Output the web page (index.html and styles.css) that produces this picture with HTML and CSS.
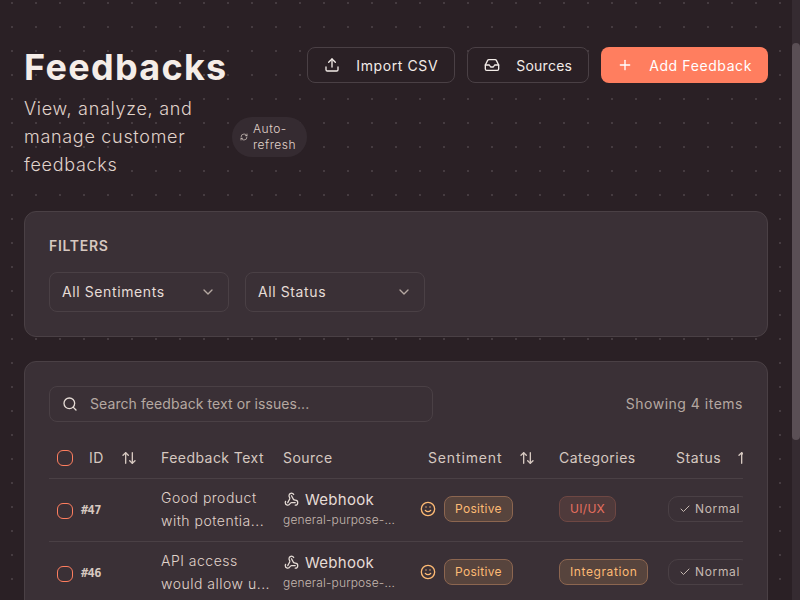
FILE: index.html
```html
<!DOCTYPE html>
<html lang="en">
<head>
  <meta charset="UTF-8" />
  <meta name="viewport" content="width=device-width, initial-scale=1.0" />
  <title>Feedbacks</title>
  <link rel="stylesheet" href="styles.css">
</head>
<body>
  <svg class="sprite" xmlns="http://www.w3.org/2000/svg">
    <symbol id="i-upload" viewBox="0 0 24 24"><path d="M21 15v4a2 2 0 0 1-2 2H5a2 2 0 0 1-2-2v-4"/><polyline points="17 8 12 3 7 8"/><line x1="12" y1="3" x2="12" y2="15"/></symbol>
    <symbol id="i-inbox" viewBox="0 0 24 24"><polyline points="22 12 16 12 14 15 10 15 8 12 2 12"/><path d="M5.45 5.11 2 12v6a2 2 0 0 0 2 2h16a2 2 0 0 0 2-2v-6l-3.45-6.89A2 2 0 0 0 16.76 4H7.24a2 2 0 0 0-1.79 1.11z"/></symbol>
    <symbol id="i-plus" viewBox="0 0 24 24"><path d="M5 12h14"/><path d="M12 5v14"/></symbol>
    <symbol id="i-chevron" viewBox="0 0 24 24"><path d="m6 9 6 6 6-6"/></symbol>
    <symbol id="i-search" viewBox="0 0 24 24"><circle cx="11" cy="11" r="8"/><path d="m21 21-4.3-4.3"/></symbol>
    <symbol id="i-sort" viewBox="0 0 24 24"><path d="m21 16-4 4-4-4"/><path d="M17 20V4"/><path d="m3 8 4-4 4 4"/><path d="M7 4v16"/></symbol>
    <symbol id="i-webhook" viewBox="0 0 24 24"><path d="M18 16.98h-5.99c-1.1 0-1.95.94-2.48 1.9A4 4 0 0 1 2 17c.01-.7.2-1.4.57-2"/><path d="m6 17 3.13-5.78c.53-.97.1-2.18-.5-3.1a4 4 0 1 1 6.89-4.06"/><path d="m12 6 3.13 5.73C15.66 12.7 16.9 13 18 13a4 4 0 0 1 0 8"/></symbol>
    <symbol id="i-smile" viewBox="0 0 24 24"><circle cx="12" cy="12" r="10"/><path d="M8 14s1.5 2 4 2 4-2 4-2"/><line x1="9" y1="9" x2="9.01" y2="9"/><line x1="15" y1="9" x2="15.01" y2="9"/></symbol>
    <symbol id="i-check" viewBox="0 0 24 24"><path d="M20 6 9 17l-5-5"/></symbol>
    <symbol id="i-refresh" viewBox="0 0 24 24"><path d="M3 12a9 9 0 0 1 9-9 9.75 9.75 0 0 1 6.74 2.74L21 8"/><path d="M21 3v5h-5"/><path d="M21 12a9 9 0 0 1-9 9 9.75 9.75 0 0 1-6.74-2.74L3 16"/><path d="M8 16H3v5"/></symbol>
  </svg>

  <main class="page">
    <header class="page-head">
      <div class="head-left">
        <h1>Feedbacks</h1>
        <div class="sub-row">
          <p class="subtitle">View, analyze, and manage customer feedbacks</p>
          <span class="auto-badge">
            <svg class="icon icon-8"><use href="#i-refresh"/></svg>
            <span class="auto-text">Auto-refresh</span>
          </span>
        </div>
      </div>
      <div class="head-actions">
        <button class="btn"><svg class="icon"><use href="#i-upload"/></svg>Import CSV</button>
        <button class="btn btn-sources"><svg class="icon"><use href="#i-inbox"/></svg>Sources</button>
        <button class="btn btn-primary"><svg class="icon"><use href="#i-plus"/></svg>Add Feedback</button>
      </div>
    </header>

    <section class="card filters">
      <h2>FILTERS</h2>
      <div class="filter-row">
        <div class="select">All Sentiments<svg class="icon chev"><use href="#i-chevron"/></svg></div>
        <div class="select">All Status<svg class="icon chev"><use href="#i-chevron"/></svg></div>
      </div>
    </section>

    <section class="card list">
      <div class="list-top">
        <div class="search">
          <svg class="icon"><use href="#i-search"/></svg>
          <span>Search feedback text or issues...</span>
        </div>
        <span class="count">Showing 4 items</span>
      </div>

      <div class="table-wrap">
        <table>
          <colgroup>
            <col class="c-check"><col class="c-id"><col class="c-text"><col class="c-source"><col class="c-sent"><col class="c-cat"><col class="c-status">
          </colgroup>
          <thead>
            <tr>
              <th><span class="check"></span></th>
              <th class="th-sort"><span class="th-in th-id">ID<svg class="icon"><use href="#i-sort"/></svg></span></th>
              <th>Feedback Text</th>
              <th>Source</th>
              <th class="th-sort"><span class="th-in th-sent">Sentiment<svg class="icon"><use href="#i-sort"/></svg></span></th>
              <th>Categories</th>
              <th class="th-sort"><span class="th-in th-status">Status<svg class="icon"><use href="#i-sort"/></svg></span></th>
            </tr>
          </thead>
          <tbody>
            <tr>
              <td><span class="check"></span></td>
              <td class="id">#47</td>
              <td class="fb-text">Good product with potentia...</td>
              <td>
                <div class="src"><svg class="icon icon-15"><use href="#i-webhook"/></svg>Webhook</div>
                <div class="src-sub">general-purpose-...</div>
              </td>
              <td><div class="sent"><svg class="icon smile"><use href="#i-smile"/></svg><span class="tag tag-orange">Positive</span></div></td>
              <td><span class="tag tag-red">UI/UX</span></td>
              <td><span class="status"><svg class="icon icon-12"><use href="#i-check"/></svg>Normal</span></td>
            </tr>
            <tr>
              <td><span class="check"></span></td>
              <td class="id">#46</td>
              <td class="fb-text">API access would allow u...</td>
              <td>
                <div class="src"><svg class="icon icon-15"><use href="#i-webhook"/></svg>Webhook</div>
                <div class="src-sub">general-purpose-...</div>
              </td>
              <td><div class="sent"><svg class="icon smile"><use href="#i-smile"/></svg><span class="tag tag-orange">Positive</span></div></td>
              <td><span class="tag tag-orange tag-wide">Integration</span></td>
              <td><span class="status"><svg class="icon icon-12"><use href="#i-check"/></svg>Normal</span></td>
            </tr>
          </tbody>
        </table>
      </div>
    </section>
  </main>

  <div class="scrollbar"><div class="thumb"></div></div>
</body>
</html>
```
FILE: styles.css
```css
* {
  box-sizing: border-box;
}

html, body {
  margin: 0;
  height: 100%;
  overflow: hidden;
}

body {
  font-family: 'Inter', 'Noto Sans', sans-serif;
  font-size: 14px;
  letter-spacing: 0.5px;
  color: #f3ece8;
  background-color: #2a2025;
  background-image: radial-gradient(circle at center, #453b40 1px, transparent 1.1px);
  background-size: 24px 24px;
  background-position: 0 -9px;
}

.sprite {
  display: none;
}

.icon {
  width: 16px;
  height: 16px;
  flex: none;
  fill: none;
  stroke: currentColor;
  stroke-width: 2;
  stroke-linecap: round;
  stroke-linejoin: round;
}
.icon-8 { width: 8px; height: 8px; }
.icon-12 { width: 12px; height: 12px; }
.icon-15 { width: 15px; height: 15px; }

.page {
  width: 792px;
  padding: 47px 24px 0;
}

.page-head {
  display: flex;
  justify-content: space-between;
  align-items: flex-start;
  margin-bottom: 32px;
}

h1 {
  margin: 0 0 8px;
  font-size: 36px;
  line-height: 40px;
  font-weight: 700;
  letter-spacing: 1.3px;
  color: #f5ede8;
}

.sub-row {
  display: flex;
  align-items: center;
  gap: 8px;
}

.subtitle {
  width: 200px;
  margin: 0;
  font-size: 18px;
  line-height: 28px;
  font-weight: 300;
  letter-spacing: 0.7px;
  color: #e0d3cb;
}

.auto-badge {
  display: flex;
  align-items: center;
  gap: 5px;
  width: 75px;
  height: 40px;
  padding: 0 8px;
  border-radius: 20px;
  background: #352b31;
  font-size: 12px;
  line-height: 16px;
  font-weight: 300;
  color: #e0d3cb;
}
.auto-text {
  width: 50px;
}

.head-actions {
  display: flex;
  gap: 12px;
}

.btn {
  display: flex;
  align-items: center;
  gap: 16px;
  height: 36px;
  padding: 0 16px;
  border: 1px solid #4a4045;
  border-radius: 8px;
  background: #2a2025;
  color: #f3ece8;
  font: inherit;
  letter-spacing: 0.6px;
  white-space: nowrap;
}
.btn-sources {
  letter-spacing: 0.25px;
}
.btn-primary {
  border: 0;
  background: #ff7e5f;
  color: #fff;
}

.card {
  margin-bottom: 24px;
  padding: 24px;
  border: 1px solid #4a4045;
  border-radius: 12px;
  background: #3a3036;
}

.filters {
  height: 126px;
}

h2 {
  margin: 0 0 16px;
  font-size: 14px;
  line-height: 20px;
  font-weight: 600;
  letter-spacing: 0.7px;
  color: #d6c8c0;
}

.filter-row {
  display: flex;
  gap: 16px;
}

.select {
  display: flex;
  align-items: center;
  justify-content: space-between;
  width: 180px;
  height: 40px;
  padding: 0 12px 1px;
  border: 1px solid #4a4045;
  border-radius: 8px;
  letter-spacing: 0.6px;
  color: #e6dcd6;
}
.chev {
  color: #b5a8a1;
}

.list-top {
  display: flex;
  align-items: center;
  justify-content: space-between;
  margin-bottom: 16px;
}

.search {
  display: flex;
  align-items: center;
  gap: 12px;
  width: 384px;
  height: 36px;
  padding: 0 12px 1px;
  border: 1px solid #4a4045;
  border-radius: 8px;
  letter-spacing: 0.08px;
  color: #b5a8a1;
}
.search .icon {
  color: #e6dcd6;
}

.count {
  padding-bottom: 1px;
  letter-spacing: 0.5px;
  color: #b5a8a1;
}

.table-wrap {
  overflow: hidden;
}

table {
  width: 720px;
  table-layout: fixed;
  border-collapse: collapse;
}
.c-check { width: 32px; }
.c-id { width: 72px; }
.c-text { width: 122px; }
.c-source { width: 137px; }
.c-sent { width: 139px; }
.c-cat { width: 109px; }
.c-status { width: 109px; }

th {
  height: 40px;
  padding: 0 8px;
  text-align: left;
  font-weight: 400;
  letter-spacing: 0.45px;
  color: #d6c8c0;
  white-space: nowrap;
}
td {
  height: 63px;
  padding: 0 8px 2px;
  border-top: 1px solid #4a4045;
  vertical-align: middle;
}

.check {
  display: block;
  width: 16px;
  height: 16px;
  border: 1px solid #ff7e5f;
  border-radius: 6px;
}
td .check {
  margin-top: 4px;
}

.th-in {
  display: flex;
  align-items: center;
}
.th-sort .th-sent,
.th-sort .th-status {
  margin-left: 8px;
}
.th-id { gap: 17px; }
.th-sent { gap: 17px; letter-spacing: 0.85px; }
.th-status { gap: 16px; letter-spacing: 0.6px; }

.id {
  padding-left: 0;
  padding-top: 2px;
  font-family: 'DejaVu Sans Mono', monospace;
  font-size: 12px;
  font-weight: 700;
  letter-spacing: -0.6px;
  color: #d6c8c0;
}

.fb-text {
  padding-right: 0;
  line-height: 23px;
  font-weight: 300;
  color: #e0d3cb;
}

.src {
  display: flex;
  align-items: center;
  gap: 6px;
  font-size: 15px;
  line-height: 20px;
  letter-spacing: 0.3px;
  color: #e6dcd6;
}
.src .icon {
  margin-left: 1px;
}
.src-sub {
  margin-top: 2px;
  font-size: 12px;
  line-height: 16px;
  font-weight: 300;
  letter-spacing: 0.15px;
  color: #c5b8b0;
}

.sent {
  display: flex;
  align-items: center;
  gap: 8px;
}
.smile {
  color: #fdba74;
}

.tag {
  display: inline-block;
  height: 26px;
  padding: 0 10px;
  border: 1px solid;
  border-radius: 8px;
  font-size: 12px;
  line-height: 24px;
  vertical-align: middle;
  letter-spacing: 0.3px;
}
.tag-wide {
  letter-spacing: 0.6px;
}
.tag-orange {
  border-color: #8c6650;
  background: #57443d;
  color: #fdba74;
}
.tag-red {
  border-color: #6e4743;
  background: #4f3a3b;
  color: #e8705f;
}

.status {
  display: inline-flex;
  align-items: center;
  gap: 4px;
  height: 26px;
  padding: 0 10px;
  border: 1px solid #4a4045;
  border-radius: 10px;
  font-size: 12px;
  letter-spacing: 0.65px;
  color: #c5b8b0;
}

.scrollbar {
  position: fixed;
  top: 0;
  right: 0;
  bottom: 0;
  width: 8px;
  background: #352b31;
}
.thumb {
  margin-top: 43px;
  height: 397px;
  border-radius: 4px;
  background: #5a4f55;
}
```
